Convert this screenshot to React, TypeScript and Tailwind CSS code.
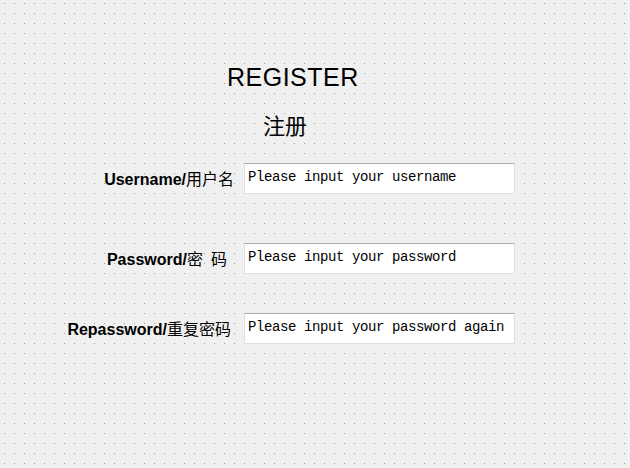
import React from 'react';

const rows = [
  { en: 'Username', zh: '用户名', value: 'Please input your username', pr: 'pr-0', mt: 'mt-[28px]' },
  { en: 'Password', zh: 'pw', value: 'Please input your password', pr: 'pr-[7px]', mt: 'mt-[49px]' },
  { en: 'Repassword', zh: '重复密码', value: 'Please input your password again', pr: 'pr-[3px]', mt: 'mt-[39px]' },
];

export default function App() {
  return (
    <div className="w-[630px] h-[468px] overflow-hidden bg-[#f0f0f0] bg-[linear-gradient(to_bottom,transparent_1px,#f0f0f0_1px),linear-gradient(to_right,#9a9a9a_1px,transparent_1px)] bg-size-[10px_10px] bg-position-[4px_3px] font-['Liberation_Sans','Noto_Sans_CJK_SC',sans-serif] text-black">
      {/* heading */}
      <div className="pt-[62px] pl-[227px] text-[25px] leading-[30px] tracking-[0.5px]">REGISTER</div>
      <div className="mt-[21px] pl-[263px] text-[22px] leading-[22px] font-['Noto_Sans_CJK_SC',sans-serif]">注册</div>

      {/* form rows */}
      {rows.map((r) => (
        <div key={r.en} className={`flex items-center ${r.mt}`}>
          <div className={`w-[234px] text-right whitespace-nowrap ${r.pr}`}>
            <span className="text-[16px] font-bold">{r.en}/</span>
            <span className="text-[16px] font-['Noto_Sans_CJK_SC',sans-serif]">
              {r.zh === 'pw' ? (
                <>
                  密<span className="inline-block w-[8px]" />码
                </>
              ) : (
                r.zh
              )}
            </span>
          </div>
          <input
            readOnly
            defaultValue={r.value}
            className="ml-[10px] w-[271px] h-[31px] bg-white border border-[#dde0e7] border-t-[#a9abb1] pl-[3px] pb-[3px] outline-none font-['Liberation_Mono',monospace] text-[14px] tracking-[-0.4px] text-black"
          />
        </div>
      ))}
    </div>
  );
}
